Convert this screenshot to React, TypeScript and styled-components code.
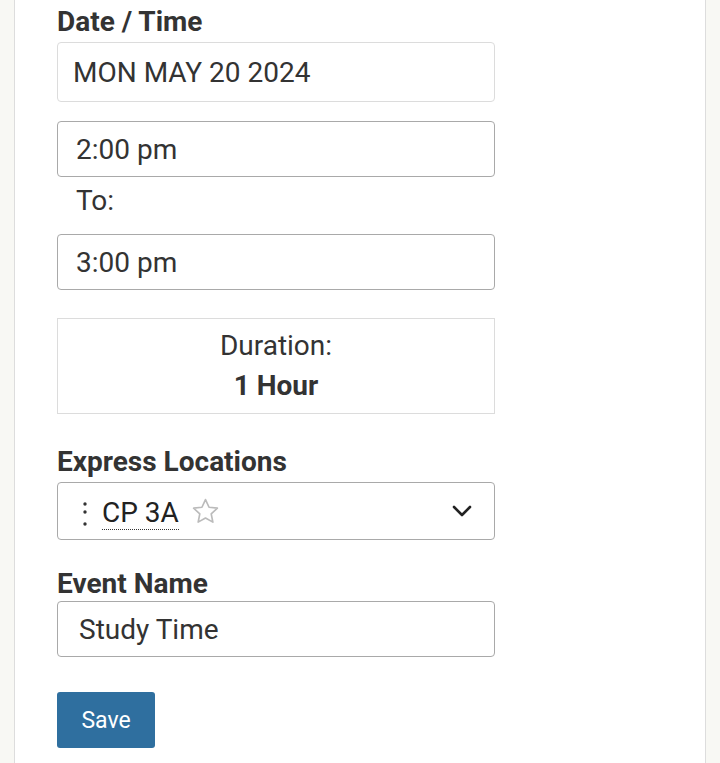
import React from "react";
import styled, { createGlobalStyle } from "styled-components";

const Global = createGlobalStyle`
  html, body { margin: 0; padding: 0; }
  body {
    background: #f8f8f4;
    font-family: Roboto, "Liberation Sans", sans-serif;
    color: #333;
  }
`;

const Panel = styled.div`
  margin: 0 14px;
  min-height: 763px;
  box-sizing: border-box;
  background: #fff;
  border-left: 1px solid #ddd;
  border-right: 1px solid #ddd;
  padding: 6px 0 0 42px;
`;

const Form = styled.div`
  width: 438px;
  display: flex;
  flex-direction: column;
`;

const Label = styled.div<{ $gap?: number; $after?: number }>`
  font-size: 28px;
  font-weight: 700;
  line-height: 32px;
  color: #333;
  margin-top: ${(p) => p.$gap ?? 0}px;
  margin-bottom: ${(p) => p.$after ?? 4}px;
`;

const Field = styled.div<{ $light?: boolean; $h: number; $pad: number; $gap?: number }>`
  box-sizing: border-box;
  height: ${(p) => p.$h}px;
  border: 1px solid ${(p) => (p.$light ? "#dcdcdc" : "#a9a9a9")};
  border-radius: 4px;
  display: flex;
  align-items: center;
  padding-left: ${(p) => p.$pad}px;
  font-size: 28px;
  color: #333;
  margin-top: ${(p) => p.$gap ?? 0}px;
`;

const ToLabel = styled.div`
  font-size: 28px;
  line-height: 32px;
  padding-left: 19px;
  margin: 8px 0 17px;
  color: #333;
`;

const DurationBox = styled.div`
  box-sizing: border-box;
  margin-top: 28px;
  height: 96px;
  border: 1px solid #dcdcdc;
  display: flex;
  flex-direction: column;
  align-items: center;
  justify-content: center;
  gap: 8px;
  font-size: 28px;
  color: #333;
`;

const DurLabel = styled.div`
  line-height: 32px;
`;

const DurValue = styled.div`
  font-weight: 700;
  line-height: 32px;
`;

const SelectBox = styled.div`
  box-sizing: border-box;
  height: 58px;
  border: 1px solid #a9a9a9;
  border-radius: 4px;
  display: flex;
  align-items: center;
  padding: 0 22px 0 24px;
  font-size: 28px;
  color: #222;
`;

const Handle = styled.svg`
  width: 6px;
  height: 30px;
  margin-top: 10px;
  flex: none;
`;

const Code = styled.span`
  margin-left: 14px;
  border-bottom: 1px dotted #333;
  line-height: 32px;
  padding-top: 4px;
`;

const Star = styled.svg`
  width: 31px;
  height: 31px;
  margin-left: 11px;
  flex: none;
`;

const Chevron = styled.svg`
  width: 20px;
  height: 14px;
  margin-left: auto;
  flex: none;
`;

const SaveButton = styled.button`
  margin-top: 35px;
  width: 98px;
  height: 56px;
  border: none;
  border-radius: 3px;
  background: #2f6f9f;
  color: #fff;
  font-family: Roboto, "Liberation Sans", sans-serif;
  font-size: 23px;
  padding: 0;
`;

export default function App() {
  return (
    <>
      <Global />
      <Panel>
        <Form>
          <Label>Date / Time</Label>
          <Field $light $h={60} $pad={15}>MON MAY 20 2024</Field>
          <Field $h={56} $pad={18} $gap={19}>2:00 pm</Field>
          <ToLabel>To:</ToLabel>
          <Field $h={56} $pad={18}>3:00 pm</Field>
          <DurationBox>
            <DurLabel>Duration:</DurLabel>
            <DurValue>1 Hour</DurValue>
          </DurationBox>
          <Label $gap={32}>Express Locations</Label>
          <SelectBox>
            <Handle viewBox="0 0 6 30">
              <circle cx="3" cy="3" r="1.7" fill="#333" />
              <circle cx="3" cy="11" r="1.7" fill="#333" />
              <circle cx="3" cy="23" r="1.7" fill="#333" />
            </Handle>
            <Code>CP 3A</Code>
            <Star viewBox="0 0 24 24">
              <path
                d="M12 2.8l2.75 5.9 6.45.75-4.78 4.4 1.27 6.37L12 17.02l-5.69 3.2 1.27-6.37L2.8 9.45l6.45-.75z"
                fill="none"
                stroke="#bbb"
                strokeWidth="1.3"
                strokeLinejoin="round"
              />
            </Star>
            <Chevron viewBox="0 0 20 14">
              <path d="M2 3l8 8 8-8" fill="none" stroke="#222" strokeWidth="2.6" strokeLinecap="round" strokeLinejoin="round" />
            </Chevron>
          </SelectBox>
          <Label $gap={28} $after={1}>Event Name</Label>
          <Field $h={56} $pad={21}>Study Time</Field>
          <div>
            <SaveButton>Save</SaveButton>
          </div>
        </Form>
      </Panel>
    </>
  );
}
